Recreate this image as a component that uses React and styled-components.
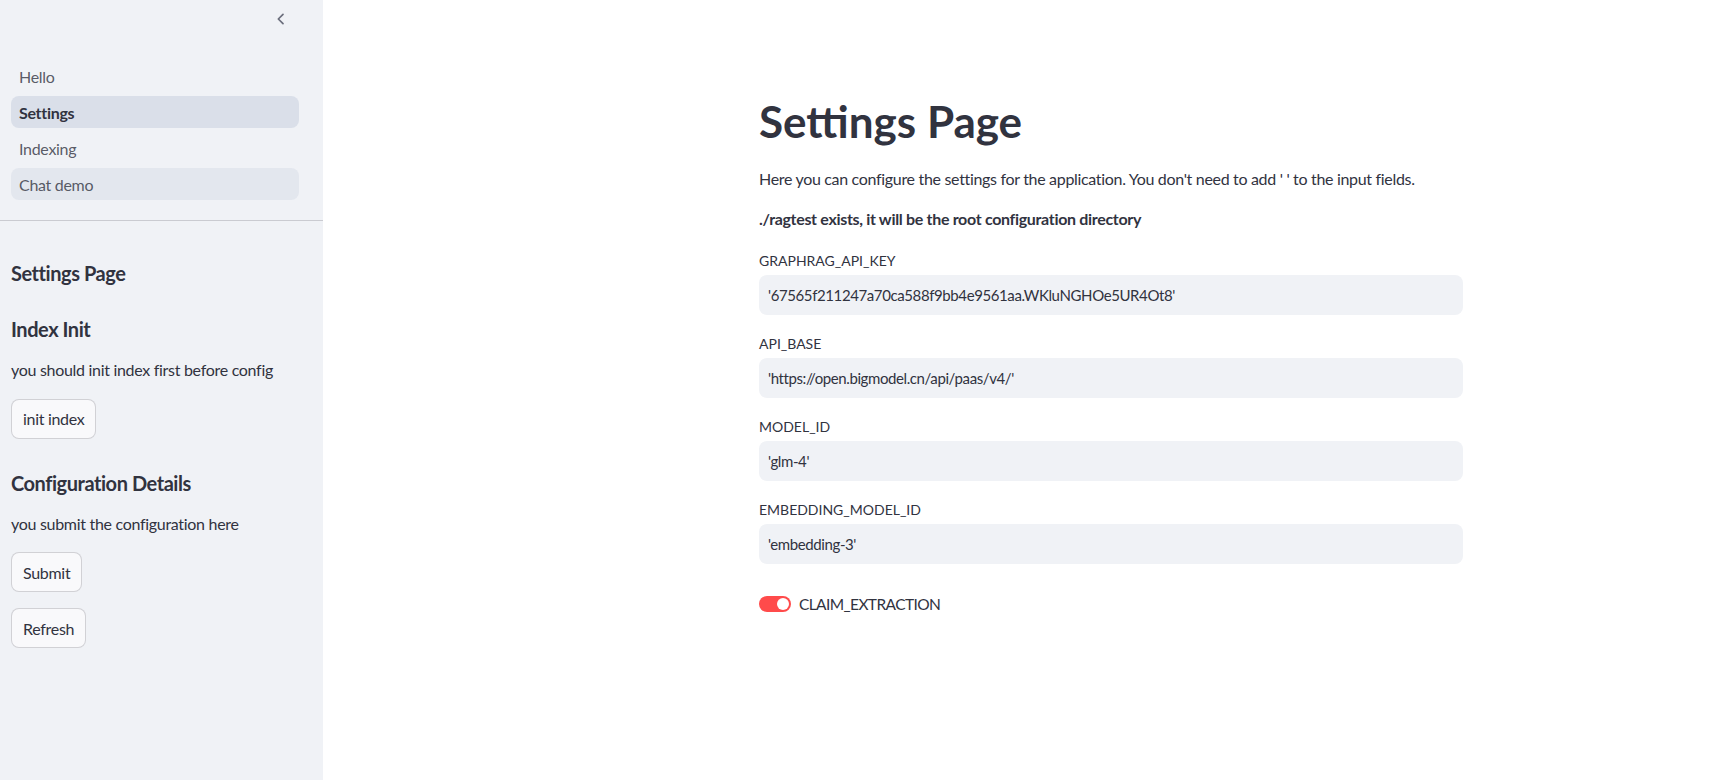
import React, { useState } from "react";
import styled, { createGlobalStyle } from "styled-components";

const GlobalStyle = createGlobalStyle`
  html, body {
    margin: 0;
    padding: 0;
    background: #ffffff;
  }
  body {
    font-family: Lato, "Noto Sans", sans-serif;
    color: #31333f;
  }
  * {
    box-sizing: border-box;
  }
`;

const Shell = styled.div`
  display: flex;
  min-height: 100vh;
  height: 780px;
  overflow: hidden;
`;

const Sidebar = styled.aside`
  width: 323px;
  flex-shrink: 0;
  background: #f0f2f6;
  display: flex;
  flex-direction: column;
`;

const SidebarHeader = styled.div`
  height: 38px;
  display: flex;
  justify-content: flex-end;
  align-items: center;
  padding-right: 34px;
  color: #6c6f7d;
`;

const Nav = styled.nav`
  display: flex;
  flex-direction: column;
  gap: 4px;
  padding: 22px 24px 20px 11px;
  border-bottom: 1px solid rgba(49, 51, 63, 0.2);
`;

const NavItem = styled.a`
  height: 32px;
  display: flex;
  align-items: center;
  padding: 0 8px;
  border-radius: 8px;
  font-size: 16px;
  letter-spacing: -0.3px;
  text-decoration: none;
  cursor: pointer;
  color: ${(p) => (p.$active ? "#31333f" : "rgba(49, 51, 63, 0.8)")};
  font-weight: ${(p) => (p.$active ? 700 : 400)};
  background: ${(p) =>
    p.$active
      ? "rgba(151, 166, 195, 0.25)"
      : p.$hover
      ? "rgba(151, 166, 195, 0.15)"
      : "transparent"};
`;

const SidebarBody = styled.div`
  display: flex;
  flex-direction: column;
  align-items: flex-start;
  gap: 16px;
  padding: 40px 11px 0;
`;

const SideHeading = styled.h3`
  margin: ${(p) => (p.$first ? "0" : "16px 0 0")};
  font-size: 20px;
  line-height: 24px;
  font-weight: 700;
  letter-spacing: -0.45px;
  color: #31333f;
`;

const Text = styled.p`
  margin: 0;
  font-size: 16px;
  line-height: 25.6px;
  letter-spacing: -0.3px;
  color: #31333f;
`;

const Button = styled.button`
  height: 40px;
  padding: 0 11px;
  border: 1px solid rgba(49, 51, 63, 0.2);
  border-radius: 8px;
  background: #f9f9fb;
  font-family: inherit;
  font-size: 16px;
  letter-spacing: -0.3px;
  color: #31333f;
  cursor: pointer;
`;

const Main = styled.main`
  flex: 1;
  padding: 95px 0 0 436px;
`;

const Content = styled.div`
  width: 704px;
  display: flex;
  flex-direction: column;
`;

const Title = styled.h1`
  margin: 0 0 18px;
  font-size: 44px;
  line-height: 53px;
  font-weight: 700;
  color: #31333f;
`;

const Intro = styled.p`
  margin: 0 0 14px;
  font-size: 16px;
  line-height: 25.6px;
  letter-spacing: -0.32px;
  font-weight: ${(p) => (p.$bold ? 700 : 400)};
`;

const Field = styled.div`
  margin-top: ${(p) => (p.$first ? "3px" : "16px")};
  display: flex;
  flex-direction: column;
`;

const Label = styled.label`
  height: 24px;
  display: flex;
  align-items: center;
  margin-bottom: 3px;
  font-size: 14px;
  color: #31333f;
`;

const Input = styled.input`
  height: 40px;
  width: 100%;
  border: 1px solid transparent;
  border-radius: 8px;
  background: #f0f2f6;
  padding: 0 8px;
  font-family: inherit;
  font-size: 15px;
  letter-spacing: -0.4px;
  color: #31333f;
  outline: none;
`;

const ToggleRow = styled.label`
  margin-top: 20px;
  height: 40px;
  display: flex;
  align-items: center;
  gap: 8px;
  font-size: 15.5px;
  letter-spacing: -0.6px;
  cursor: pointer;
`;

const Track = styled.span`
  width: 32px;
  height: 16px;
  border-radius: 8px;
  background: ${(p) => (p.$on ? "#ff4b4b" : "#d5dae5")};
  display: flex;
  align-items: center;
  justify-content: ${(p) => (p.$on ? "flex-end" : "flex-start")};
  padding: 0 2px;
`;

const Knob = styled.span`
  width: 12px;
  height: 12px;
  border-radius: 50%;
  background: #ffffff;
`;

const Chevron = () => (
  <svg width="16" height="16" viewBox="0 0 24 24" fill="none" stroke="currentColor" strokeWidth="2.6" strokeLinecap="round" strokeLinejoin="round">
    <path d="M15 5l-7 7 7 7" />
  </svg>
);

const fields = [
  { key: "GRAPHRAG_API_KEY", value: "'67565f211247a70ca588f9bb4e9561aa.WKluNGHOe5UR4Ot8'" },
  { key: "API_BASE", value: "'https://open.bigmodel.cn/api/paas/v4/'" },
  { key: "MODEL_ID", value: "'glm-4'" },
  { key: "EMBEDDING_MODEL_ID", value: "'embedding-3'" },
];

export default function App() {
  const [claim, setClaim] = useState(true);

  return (
    <>
      <GlobalStyle />
      <Shell>
        <Sidebar>
          <SidebarHeader>
            <Chevron />
          </SidebarHeader>
          <Nav>
            <NavItem>Hello</NavItem>
            <NavItem $active>Settings</NavItem>
            <NavItem>Indexing</NavItem>
            <NavItem $hover>Chat demo</NavItem>
          </Nav>
          <SidebarBody>
            <SideHeading $first>Settings Page</SideHeading>
            <SideHeading>Index Init</SideHeading>
            <Text>you should init index first before config</Text>
            <Button>init index</Button>
            <SideHeading>Configuration Details</SideHeading>
            <Text>you submit the configuration here</Text>
            <Button>Submit</Button>
            <Button>Refresh</Button>
          </SidebarBody>
        </Sidebar>
        <Main>
          <Content>
            <Title>Settings Page</Title>
            <Intro>
              Here you can configure the settings for the application. You don't need to add ' ' to the input fields.
            </Intro>
            <Intro $bold>./ragtest exists, it will be the root configuration directory</Intro>
            {fields.map((f, i) => (
              <Field key={f.key} $first={i === 0}>
                <Label>{f.key}</Label>
                <Input defaultValue={f.value} />
              </Field>
            ))}
            <ToggleRow onClick={() => setClaim(!claim)}>
              <Track $on={claim}>
                <Knob />
              </Track>
              CLAIM_EXTRACTION
            </ToggleRow>
          </Content>
        </Main>
      </Shell>
    </>
  );
}
